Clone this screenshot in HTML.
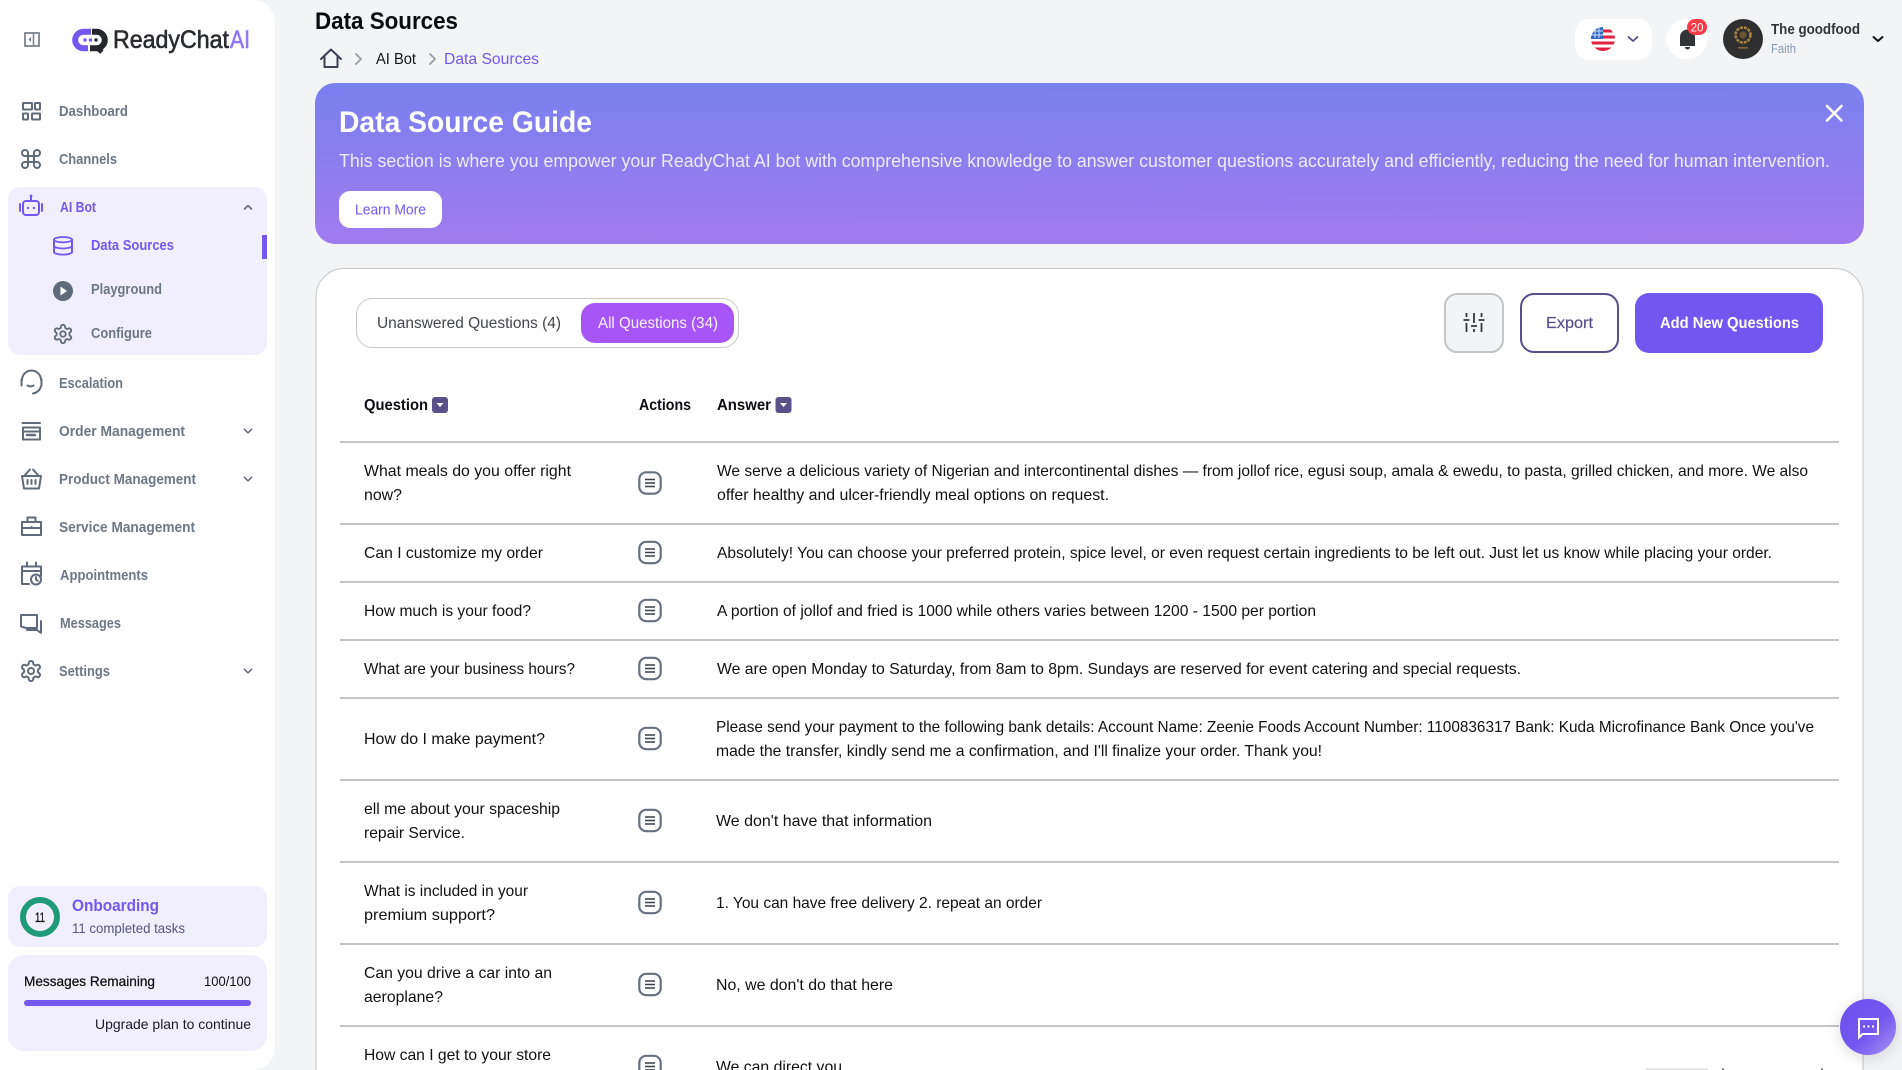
<!DOCTYPE html>
<html lang="en">
<head>
<meta charset="utf-8">
<title>Data Sources</title>
<style>
html,body{margin:0;padding:0;width:1902px;height:1070px;overflow:hidden;background:#f3f4f6}
svg{display:block;position:absolute;left:0;top:0}
text{font-family:"Liberation Sans",sans-serif;white-space:pre}
.nav{font-size:14.5px;font-weight:700;fill:#66707f;opacity:.95}
.ic{fill:none;stroke:#5f6b7a;stroke-width:2;stroke-linecap:round;stroke-linejoin:round}
.t{font-size:16px;fill:#111}
.h{font-size:15.5px;font-weight:700;fill:#0b0b12}
.line{fill:#c4c4c9}
</style>
</head>
<body>
<svg width="1902" height="1070" viewBox="0 0 1902 1070" xmlns="http://www.w3.org/2000/svg">
<defs>
<linearGradient id="bn" x1="0" y1="0" x2="0.03" y2="1"><stop offset="0" stop-color="#7a80ee"/><stop offset="1" stop-color="#a07bee"/></linearGradient>
<linearGradient id="fab" x1="0.2" y1="0.2" x2="1" y2="1"><stop offset="0" stop-color="#6f52ee"/><stop offset=".45" stop-color="#7357ef"/><stop offset="1" stop-color="#aa94f6"/></linearGradient>
<filter id="sh" x="-40%" y="-40%" width="180%" height="180%"><feDropShadow dx="0" dy="3" stdDeviation="7" flood-color="#000" flood-opacity=".14"/></filter>
<clipPath id="fl"><circle cx="1603" cy="39" r="12"/></clipPath>
<symbol id="gear" viewBox="0 0 24 24" overflow="visible"><path d="M12.22 2h-.44a2 2 0 0 0-2 2v.18a2 2 0 0 1-1 1.73l-.43.25a2 2 0 0 1-2 0l-.15-.08a2 2 0 0 0-2.73.73l-.22.38a2 2 0 0 0 .73 2.73l.15.1a2 2 0 0 1 1 1.72v.51a2 2 0 0 1-1 1.74l-.15.09a2 2 0 0 0-.73 2.73l.22.38a2 2 0 0 0 2.73.73l.15-.08a2 2 0 0 1 2 0l.43.25a2 2 0 0 1 1 1.73V20a2 2 0 0 0 2 2h.44a2 2 0 0 0 2-2v-.18a2 2 0 0 1 1-1.73l.43-.25a2 2 0 0 1 2 0l.15.08a2 2 0 0 0 2.73-.73l.22-.39a2 2 0 0 0-.73-2.73l-.15-.08a2 2 0 0 1-1-1.74v-.5a2 2 0 0 1 1-1.74l.15-.09a2 2 0 0 0 .73-2.73l-.22-.38a2 2 0 0 0-2.73-.73l-.15.08a2 2 0 0 1-2 0l-.43-.25a2 2 0 0 1-1-1.73V4a2 2 0 0 0-2-2z"/><circle cx="12" cy="12" r="3"/></symbol>
<g id="act"><rect x="-10.7" y="-10.7" width="21.4" height="21.4" rx="7" fill="#fff" stroke="#667080" stroke-width="2.2"/><path d="M-5 -3.5H5M-5 0H5M-5 3.500H5" stroke="#3a3f4a" stroke-width="1.4"/></g>
<path id="dn" d="M-3.6 -1.8L0 1.8L3.6 -1.8" fill="none" stroke="#667080" stroke-width="1.6" stroke-linecap="round" stroke-linejoin="round"/>
</defs>

<!-- sidebar -->
<rect x="-24" y="0" width="299" height="1070" rx="22" fill="#fff"/>
<rect x="8" y="187" width="259" height="168" rx="12" fill="#f1effd"/>
<rect x="25" y="33" width="14" height="13" fill="none" stroke="#7b8590" stroke-width="1.8"/>
<path d="M33.500 33v13" stroke="#7b8590" stroke-width="1.6"/><path d="M31 37l-2.600 2.500 2.600 2.500z" fill="#7b8590"/>

<!-- logo -->
<path d="M91 31.700H83.500a8.300 8.300 0 0 0 0 16.600H88" fill="none" stroke="#7357ee" stroke-width="6"/>
<path d="M92 31.700H96.500a8.300 8.300 0 0 1 0 16.600H90" fill="none" stroke="#25272c" stroke-width="6"/>
<path d="M96 47l6 5" fill="none" stroke="#25272c" stroke-width="5"/>
<circle cx="85" cy="40" r="1.700" fill="#7357ee"/><circle cx="90.500" cy="40" r="1.700" fill="#7357ee"/><circle cx="96" cy="40" r="1.700" fill="#25272c"/>
<text x="113" y="48" font-size="25" textLength="116" lengthAdjust="spacingAndGlyphs" fill="#2a2b30" stroke="#2a2b30" stroke-width=".6">ReadyChat</text>
<text x="230" y="48" font-size="25" textLength="20" lengthAdjust="spacingAndGlyphs" fill="#8f78f2" stroke="#8f78f2" stroke-width=".6">AI</text>

<!-- nav -->
<g class="ic">
<rect x="23" y="103" width="9" height="6.500" rx=".5"/><rect x="35" y="103" width="5" height="6.500" rx=".5"/><rect x="23" y="113.500" width="5" height="6" rx=".5"/><rect x="32" y="113.500" width="8" height="6" rx=".5"/>
<path transform="translate(19 147)" d="M15 6v12a3 3 0 1 0 3-3H6a3 3 0 1 0 3 3V6a3 3 0 1 0-3 3h12a3 3 0 1 0-3-3"/>
<path d="M22 380a9.500 9.500 0 0 1 19 0M21.500 379.500v6M41.500 379.500v6M41 386a10 9 0 0 1-8 7.500M27.500 385.500c1.500 1.200 4.500 1.200 6 0"/>
<path d="M22.500 423h17.500M23 427.500h17v12h-17zM23 431.500h17"/><path d="M27 435h8" stroke-width="2.400"/>
<path d="M22 476h19l-2 12.500h-15zM25 475l5-5.500M38 475l-5-5.500M27.500 480v4M31.500 480v4M35.500 480v4"/>
<path d="M22 522h19v13h-19zM22 528h19M27.500 522v-4.500h8v4.500"/><path d="M31.500 527v.6"/>
<path d="M41 576v-9.500h-19v17.500h7M22 571h19M27 566v-3.500M36 566v-3.500"/><circle cx="36" cy="579.500" r="5"/><path d="M36 577v2.500l1.700 1.300"/>
<path d="M21 615h16v13H26l-5-1.500zM41 621v12l-4-3H27"/>
<use href="#gear" x="19" y="659" width="24" height="24"/>
<use href="#gear" x="52" y="323" width="22" height="22"/>
</g>
<use href="#dn" x="248" y="431"/><use href="#dn" x="248" y="479"/><use href="#dn" x="248" y="671"/>
<text class="nav" x="59" y="116" textLength="69" lengthAdjust="spacingAndGlyphs">Dashboard</text>
<text class="nav" x="59" y="164" textLength="58" lengthAdjust="spacingAndGlyphs">Channels</text>

<g fill="none" stroke="#7357ee" stroke-width="2" stroke-linecap="round">
<rect x="23" y="201" width="16" height="14" rx="3"/><path d="M31 197v4M20 204v7M42 204v7"/>
<path transform="translate(51 235.300) scale(1 .88)" d="M3 5V19A9 3 0 0 0 21 19V5M3 12A9 3 0 0 0 21 12M3 5a9 3 0 1 0 18 0a9 3 0 1 0-18 0"/>
</g>
<circle cx="31" cy="196" r="1.400" fill="#7357ee"/><circle cx="28" cy="208" r="1.200" fill="#7357ee"/><circle cx="34" cy="208" r="1.200" fill="#7357ee"/>
<text x="60" y="212" font-size="14.500" font-weight="700" fill="#7357ee" textLength="36" lengthAdjust="spacingAndGlyphs">AI Bot</text>
<path d="M244.500 209L248 205.500L251.500 209" fill="none" stroke="#667080" stroke-width="1.600" stroke-linecap="round" stroke-linejoin="round"/>
<text x="91" y="250" font-size="14.500" font-weight="700" fill="#7357ee" textLength="83" lengthAdjust="spacingAndGlyphs">Data Sources</text>
<rect x="262" y="235" width="5" height="24" fill="#7357ee"/>
<circle cx="63" cy="291" r="10" fill="#5f6b7a"/><path d="M60.500 286.500l6.500 4.500-6.500 4.500z" fill="#fff"/>
<text class="nav" x="91" y="294" textLength="71" lengthAdjust="spacingAndGlyphs">Playground</text>
<text class="nav" x="91" y="338" textLength="61" lengthAdjust="spacingAndGlyphs">Configure</text>

<text class="nav" x="59" y="388" textLength="64" lengthAdjust="spacingAndGlyphs">Escalation</text>
<text class="nav" x="59" y="436" textLength="126" lengthAdjust="spacingAndGlyphs">Order Management</text>
<text class="nav" x="59" y="484" textLength="137" lengthAdjust="spacingAndGlyphs">Product Management</text>
<text class="nav" x="59" y="532" textLength="136" lengthAdjust="spacingAndGlyphs">Service Management</text>
<text class="nav" x="60" y="580" textLength="88" lengthAdjust="spacingAndGlyphs">Appointments</text>
<text class="nav" x="60" y="628" textLength="61" lengthAdjust="spacingAndGlyphs">Messages</text>
<text class="nav" x="59" y="676" textLength="51" lengthAdjust="spacingAndGlyphs">Settings</text>

<!-- onboarding -->
<rect x="8" y="886" width="259" height="61" rx="12" fill="#f1effd"/>
<circle cx="40" cy="917" r="17" fill="none" stroke="#1f9b7a" stroke-width="6"/>
<text x="35" y="922" font-size="14" fill="#111" stroke="#111" stroke-width=".3" textLength="10" lengthAdjust="spacingAndGlyphs">11</text>
<text x="72" y="911" font-size="16.500" font-weight="700" fill="#7357ee" textLength="87" lengthAdjust="spacingAndGlyphs">Onboarding</text>
<text x="72" y="933" font-size="14" fill="#55557f" textLength="113" lengthAdjust="spacingAndGlyphs">11 completed tasks</text>
<rect x="8" y="955" width="259" height="96" rx="16" fill="#f1effd"/>
<text x="24" y="986" font-size="14" fill="#111" stroke="#111" stroke-width=".25" textLength="131" lengthAdjust="spacingAndGlyphs">Messages Remaining</text>
<text x="204" y="986" font-size="14" fill="#111" textLength="47" lengthAdjust="spacingAndGlyphs">100/100</text>
<rect x="24" y="1000" width="227" height="6" rx="3" fill="#7357ee"/>
<text x="95" y="1029" font-size="14" fill="#1a1a22" textLength="156" lengthAdjust="spacingAndGlyphs">Upgrade plan to continue</text>

<!-- header -->
<text x="315" y="29" font-size="24" font-weight="700" fill="#0a0a0f" textLength="143" lengthAdjust="spacingAndGlyphs">Data Sources</text>
<path d="M321 59L331 49.500L341 59M324.500 57V67H337.500V57" fill="none" stroke="#3a4252" stroke-width="2" stroke-linejoin="round" stroke-linecap="round"/>
<path d="M356 54l5 5-5 5M430 54l5 5-5 5" fill="none" stroke="#9a9da4" stroke-width="1.800" stroke-linejoin="round" stroke-linecap="round"/>
<text x="376" y="64" font-size="16" fill="#14141a" textLength="40" lengthAdjust="spacingAndGlyphs">AI Bot</text>
<text x="444" y="64" font-size="16" fill="#7357ee" textLength="95" lengthAdjust="spacingAndGlyphs">Data Sources</text>

<!-- top right -->
<rect x="1575" y="19" width="77" height="41" rx="14" fill="#fff"/>
<g clip-path="url(#fl)">
<rect x="1591" y="27" width="24" height="24" fill="#fff"/>
<path d="M1591 29.500h24v3h-24zM1591 35.500h24v3h-24zM1591 41.500h24v3h-24zM1591 47.500h24v4h-24z" fill="#e0213f"/>
<rect x="1591" y="27" width="12" height="12" fill="#3166c4"/>
<path d="M1595 28v10M1599 28v10M1591 31h12M1591 35h12" stroke="#cfe0ff" stroke-width="1"/>
</g>
<path d="M1628.500 37l4.500 4 4.500-4" fill="none" stroke="#56508a" stroke-width="1.800" stroke-linecap="round" stroke-linejoin="round"/>
<circle cx="1687" cy="39" r="20.500" fill="#fff"/>
<path d="M1680 46v-9a7.500 7.500 0 0 1 15 0v9z" fill="#333438"/><path d="M1685 47h5a2.500 2.500 0 0 1-5 0z" fill="#333438"/>
<rect x="1687" y="19" width="20" height="16" rx="8" fill="#fb3a48"/>
<text x="1697" y="31.500" font-size="11.500" fill="#fff" text-anchor="middle">20</text>
<circle cx="1743" cy="39" r="20" fill="#2f2f2f"/>
<circle cx="1743" cy="35" r="7.500" fill="none" stroke="#a98542" stroke-width="2.500" stroke-dasharray="3 1"/>
<circle cx="1743" cy="35" r="3.500" fill="#6a5530"/>
<rect x="1738" y="47" width="10" height="1.600" fill="#a98542" opacity=".7"/>
<text x="1771" y="34" font-size="14.500" font-weight="700" fill="#33333a" textLength="89" lengthAdjust="spacingAndGlyphs">The goodfood</text>
<text x="1771" y="53" font-size="12.500" fill="#8a9bb5" textLength="25" lengthAdjust="spacingAndGlyphs">Faith</text>
<path d="M1873.500 37l4.500 4 4.500-4" fill="none" stroke="#111" stroke-width="2" stroke-linecap="round" stroke-linejoin="round"/>

<!-- banner -->
<rect x="315" y="83" width="1549" height="161" rx="20" fill="url(#bn)"/>
<text x="339" y="132" font-size="30" font-weight="700" fill="#fff" textLength="253" lengthAdjust="spacingAndGlyphs">Data Source Guide</text>
<text x="339" y="167" font-size="18" fill="#fff" fill-opacity=".84" textLength="1491" lengthAdjust="spacingAndGlyphs">This section is where you empower your ReadyChat AI bot with comprehensive knowledge to answer customer questions accurately and efficiently, reducing the need for human intervention.</text>
<rect x="339" y="191" width="103" height="37" rx="11" fill="#fff"/>
<text x="355" y="214.500" font-size="14.500" fill="#7357ee" textLength="71" lengthAdjust="spacingAndGlyphs">Learn More</text>
<path d="M1827 106l14.500 14.500M1841.500 106L1827 120.500" stroke="#fff" stroke-width="2.600" stroke-linecap="round"/>

<!-- card -->
<rect x="316" y="268.500" width="1547" height="840" rx="28" fill="#fff" stroke="#c4c4c9" stroke-width="1"/>
<rect x="356.500" y="298.500" width="382" height="49" rx="16" fill="#fff" stroke="#c9c9cc" stroke-width="1"/>
<rect x="581" y="303" width="153" height="40" rx="14" fill="#a855f7"/>
<text x="377" y="328" font-size="15.500" fill="#44444e" textLength="184" lengthAdjust="spacingAndGlyphs">Unanswered Questions (4)</text>
<text x="598" y="328" font-size="15.500" fill="#fff" fill-opacity=".92" textLength="120" lengthAdjust="spacingAndGlyphs">All Questions (34)</text>

<rect x="1445" y="294" width="58" height="58" rx="12" fill="#f3f4f6" stroke="#c4c4c9" stroke-width="2"/>
<path d="M1466.500 313v4M1466.500 323v9M1474 313v10M1474 329v3M1481.500 313v4M1481.500 323v9M1463.500 320h6M1471 326h6M1478.500 320h6" fill="none" stroke="#33363d" stroke-width="1.800"/>
<rect x="1521" y="294" width="97" height="58" rx="13" fill="#fff" stroke="#56508a" stroke-width="2"/>
<text x="1546" y="328" font-size="16" fill="#56508a" stroke="#56508a" stroke-width=".2" textLength="47" lengthAdjust="spacingAndGlyphs">Export</text>
<rect x="1635" y="293" width="188" height="60" rx="14" fill="#7156ef"/>
<text x="1660" y="328" font-size="16" font-weight="700" fill="#fff" textLength="139" lengthAdjust="spacingAndGlyphs">Add New Questions</text>

<!-- table head -->
<text class="h" x="364" y="410" textLength="64" lengthAdjust="spacingAndGlyphs">Question</text>
<rect x="432" y="397" width="16" height="16" rx="3" fill="#5a5188"/><path d="M436.500 403h7l-3.500 4z" fill="#fff"/>
<text class="h" x="639" y="410" textLength="52" lengthAdjust="spacingAndGlyphs">Actions</text>
<text class="h" x="717" y="410" textLength="54" lengthAdjust="spacingAndGlyphs">Answer</text>
<rect x="775.500" y="397" width="16" height="16" rx="3" fill="#5a5188"/><path d="M780 403h7l-3.500 4z" fill="#fff"/>
<rect class="line" x="340" y="441" width="1499" height="2"/>
<rect class="line" x="340" y="523" width="1499" height="2"/>
<rect class="line" x="340" y="581" width="1499" height="2"/>
<rect class="line" x="340" y="639" width="1499" height="2"/>
<rect class="line" x="340" y="697" width="1499" height="2"/>
<rect class="line" x="340" y="779" width="1499" height="2"/>
<rect class="line" x="340" y="861" width="1499" height="2"/>
<rect class="line" x="340" y="943" width="1499" height="2"/>
<rect class="line" x="340" y="1025" width="1499" height="2"/>

<!-- rows -->
<text class="t" x="364" y="476" textLength="207" lengthAdjust="spacingAndGlyphs">What meals do you offer right</text>
<text class="t" x="364" y="500" textLength="38" lengthAdjust="spacingAndGlyphs">now?</text>
<use href="#act" x="650" y="483"/>
<text class="t" x="717" y="476" textLength="1091" lengthAdjust="spacingAndGlyphs">We serve a delicious variety of Nigerian and intercontinental dishes — from jollof rice, egusi soup, amala &amp; ewedu, to pasta, grilled chicken, and more. We also</text>
<text class="t" x="717" y="500" textLength="392" lengthAdjust="spacingAndGlyphs">offer healthy and ulcer-friendly meal options on request.</text>

<text class="t" x="364" y="558" textLength="179" lengthAdjust="spacingAndGlyphs">Can I customize my order</text>
<use href="#act" x="650" y="552.500"/>
<text class="t" x="717" y="558" textLength="1055" lengthAdjust="spacingAndGlyphs">Absolutely! You can choose your preferred protein, spice level, or even request certain ingredients to be left out. Just let us know while placing your order.</text>

<text class="t" x="364" y="616" textLength="167" lengthAdjust="spacingAndGlyphs">How much is your food?</text>
<use href="#act" x="650" y="610.500"/>
<text class="t" x="717" y="616" textLength="599" lengthAdjust="spacingAndGlyphs">A portion of jollof and fried is 1000 while others varies between 1200 - 1500 per portion</text>

<text class="t" x="364" y="674" textLength="211" lengthAdjust="spacingAndGlyphs">What are your business hours?</text>
<use href="#act" x="650" y="668.500"/>
<text class="t" x="717" y="674" textLength="804" lengthAdjust="spacingAndGlyphs">We are open Monday to Saturday, from 8am to 8pm. Sundays are reserved for event catering and special requests.</text>

<text class="t" x="364" y="744" textLength="181" lengthAdjust="spacingAndGlyphs">How do I make payment?</text>
<use href="#act" x="650" y="738.500"/>
<text class="t" x="716" y="732" textLength="1098" lengthAdjust="spacingAndGlyphs">Please send your payment to the following bank details: Account Name: Zeenie Foods Account Number: 1100836317 Bank: Kuda Microfinance Bank Once you've</text>
<text class="t" x="716" y="756" textLength="606" lengthAdjust="spacingAndGlyphs">made the transfer, kindly send me a confirmation, and I'll finalize your order. Thank you!</text>

<text class="t" x="364" y="814" textLength="196" lengthAdjust="spacingAndGlyphs">ell me about your spaceship</text>
<text class="t" x="364" y="838" textLength="101" lengthAdjust="spacingAndGlyphs">repair Service.</text>
<use href="#act" x="650" y="820.500"/>
<text class="t" x="716" y="826" textLength="216" lengthAdjust="spacingAndGlyphs">We don't have that information</text>

<text class="t" x="364" y="896" textLength="164" lengthAdjust="spacingAndGlyphs">What is included in your</text>
<text class="t" x="364" y="920" textLength="131" lengthAdjust="spacingAndGlyphs">premium support?</text>
<use href="#act" x="650" y="902.500"/>
<text class="t" x="716" y="908" textLength="326" lengthAdjust="spacingAndGlyphs">1. You can have free delivery 2. repeat an order</text>

<text class="t" x="364" y="978" textLength="188" lengthAdjust="spacingAndGlyphs">Can you drive a car into an</text>
<text class="t" x="364" y="1002" textLength="79" lengthAdjust="spacingAndGlyphs">aeroplane?</text>
<use href="#act" x="650" y="984.500"/>
<text class="t" x="716" y="990" textLength="177" lengthAdjust="spacingAndGlyphs">No, we don't do that here</text>

<text class="t" x="364" y="1060" textLength="187" lengthAdjust="spacingAndGlyphs">How can I get to your store</text>
<use href="#act" x="650" y="1066.500"/>
<text class="t" x="716" y="1072" textLength="126" lengthAdjust="spacingAndGlyphs">We can direct you</text>
<rect x="1646" y="1068.500" width="62" height="1.500" fill="#dcdcde"/><rect x="1722" y="1068.500" width="2" height="1.500" fill="#666"/><rect x="1821" y="1068.500" width="2" height="1.500" fill="#666"/>

<!-- chat fab -->
<circle cx="1868" cy="1027" r="28" fill="url(#fab)" filter="url(#sh)"/>
<path d="M1859 1019h19v15h-15.500l-3.500 3.500z" fill="none" stroke="#fff" stroke-width="2"/>
<path d="M1863 1026.500h2M1867.500 1026.500h2M1872 1026.500h2" stroke="#fff" stroke-width="2"/>
</svg>
</body>
</html>
